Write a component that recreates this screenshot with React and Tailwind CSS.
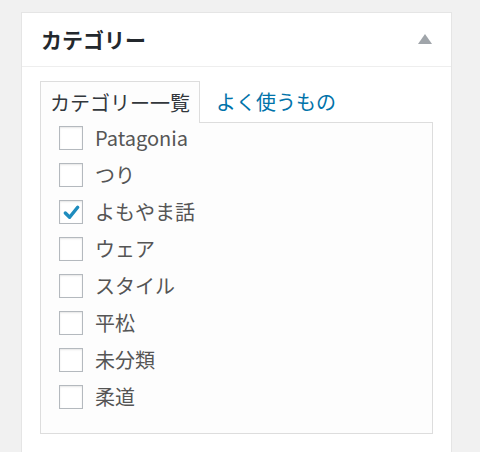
const categories = [
  { name: "Patagonia", checked: false },
  { name: "つり", checked: false },
  { name: "よもやま話", checked: true },
  { name: "ウェア", checked: false },
  { name: "スタイル", checked: false },
  { name: "平松", checked: false },
  { name: "未分類", checked: false },
  { name: "柔道", checked: false },
];

const font = { fontFamily: '"Noto Sans CJK JP", "Noto Sans", sans-serif' };

const Checkbox = ({ checked }) => (
  <span className="flex h-[24px] w-[24px] shrink-0 items-center justify-center border border-[#b4b9be] bg-white shadow-[inset_0_1px_2px_rgba(0,0,0,0.1)]">
    {checked ? (
      <svg width="19" height="19" viewBox="0 0 20 20">
        <path d="M3.5 10.5 L8 15 L16.5 4.5" fill="none" stroke="#1e8cbe" strokeWidth="3.6" strokeLinecap="round" strokeLinejoin="round" />
      </svg>
    ) : null}
  </span>
);

export default function App() {
  return (
    <div className="h-[452px] overflow-hidden bg-[#f1f1f1] pl-[21px] pr-[28px] pt-[12px]" style={font}>
      <section className="border border-[#e5e5e5] bg-white pb-[40px]">
        <div className="flex h-[54px] items-center justify-between border-b border-[#eee] pl-[19px] pr-[19px]">
          <h2 className="text-[21px] font-bold leading-none text-[#23282d]">カテゴリー</h2>
          <svg width="14" height="10" viewBox="0 0 14 10" className="mb-[1px]">
            <path d="M7 0 L14 10 L0 10 Z" fill="#a0a5aa" />
          </svg>
        </div>

        <div className="px-[18px] pt-[14px]">
          <div className="flex items-end">
            <div className="relative z-10 -mb-px flex h-[42px] w-[160px] items-center border border-b-0 border-[#ddd] bg-[#fdfdfd] pl-[9px] text-[20px] text-[#32373c]">
              カテゴリー一覧
            </div>
            <div className="flex h-[41px] items-center pl-[16px] text-[20px] text-[#0073aa]">よく使うもの</div>
          </div>
          <div className="border border-[#ddd] bg-[#fdfdfd] pb-[11px] pl-[18px] pt-[3px]">
            {categories.map((item) => (
              <label key={item.name} className="flex h-[37px] items-start gap-[12px]">
                <Checkbox checked={item.checked} />
                <span className="text-[20px] leading-[24px] text-[#555]">{item.name}</span>
              </label>
            ))}
          </div>
        </div>
      </section>
    </div>
  );
}
